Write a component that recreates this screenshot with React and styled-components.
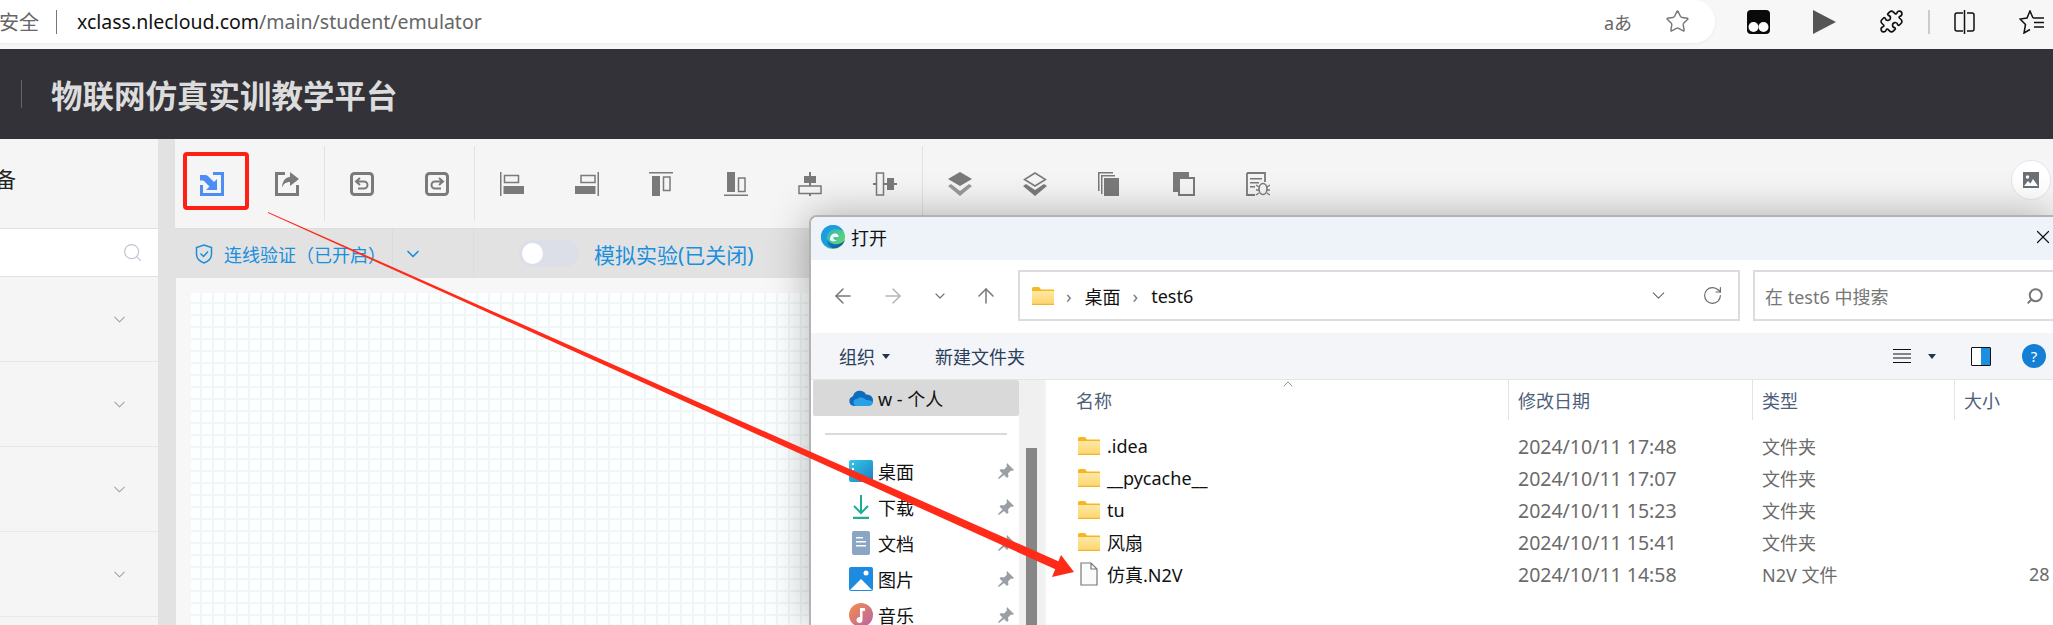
import styled, { createGlobalStyle } from "styled-components";
import { Star, Puzzle, Search, ChevronDown, ArrowLeft, ArrowRight, ArrowUp, RotateCw, X, ChevronUp } from "lucide-react";

const GlobalStyle = createGlobalStyle`
    html, body {
        margin: 0;
        padding: 0;
        background: #f5f5f5;
        overflow: hidden;
    }
    * {
        box-sizing: border-box;
    }
`

const sans = `"Noto Sans", "Noto Sans CJK SC", sans-serif`

// toolbar glyphs, all on a 24x24 box
const icons = {
    import: <>
        <path d="M13 0h11v24H0V13h3v8h18V3h-8z" fill="#4d8ef5" />
        <path d="M0 3h5c1.500 0 2.500.5 3.500 1.500L14 10l3-3v11H6l3.500-3.500L4.500 9.500C4 9 3.500 8.500 2.500 8.500H0z" fill="#4d8ef5" />
    </>,
    export: <>
        <path d="M10 0H0v24h24V13h-3v8H3V3h7z" />
        <path d="M15 0l9 7-9 7v-4c-4 0-7 2-8 6 0-6 3-11 8-11z" />
    </>,
    undo: <>
        <rect x="1.5" y="1.5" width="21" height="21" rx="3" fill="none" stroke="#7a7a7a" strokeWidth="3" />
        <path d="M10 6L6 9.5l4 3.5M6.5 9.5H14a3.2 3.2 0 0 1 0 7H8" fill="none" stroke="#7a7a7a" strokeWidth="2" />
    </>,
    redo: <>
        <rect x="1.5" y="1.5" width="21" height="21" rx="3" fill="none" stroke="#7a7a7a" strokeWidth="3" />
        <path d="M14 6l4 3.5-4 3.5M17.5 9.5H10a3.2 3.2 0 0 0 0 7h6" fill="none" stroke="#7a7a7a" strokeWidth="2" />
    </>,
    alignLeft: <>
        <rect x="0" y="0" width="1.5" height="24" />
        <rect x="4.5" y="3.5" width="14" height="7" fill="none" stroke="#7a7a7a" strokeWidth="1.5" />
        <rect x="3.5" y="14" width="20.5" height="8" />
    </>,
    alignRight: <>
        <rect x="22.5" y="0" width="1.5" height="24" />
        <rect x="6" y="3.5" width="14" height="7" fill="none" stroke="#7a7a7a" strokeWidth="1.5" />
        <rect x="0" y="14" width="20.5" height="8" />
    </>,
    alignTop: <>
        <rect x="0" y="0" width="24" height="1.5" />
        <rect x="3" y="4" width="8" height="20" />
        <rect x="14.5" y="5" width="6.5" height="13.5" fill="none" stroke="#7a7a7a" strokeWidth="1.5" />
    </>,
    alignBottom: <>
        <rect x="0" y="22.5" width="24" height="1.5" />
        <rect x="3" y="0" width="8" height="20" />
        <rect x="14.5" y="6" width="6.5" height="13.5" fill="none" stroke="#7a7a7a" strokeWidth="1.5" />
    </>,
    alignMiddle: <>
        <rect x="11" y="0" width="2" height="24" />
        <rect x="6" y="4" width="12" height="7" />
        <rect x="1" y="14" width="22" height="7.5" fill="#f5f5f5" stroke="#7a7a7a" strokeWidth="1.5" />
    </>,
    alignCenter: <>
        <rect x="0" y="11" width="24" height="2" />
        <rect x="3.5" y="1" width="7" height="22" fill="#f5f5f5" stroke="#7a7a7a" strokeWidth="1.5" />
        <rect x="14" y="6" width="7" height="12" />
    </>,
    layerUp: <>
        <path d="M12 0l12 7-12 7L0 7z" />
        <path d="M3 12L0 14l12 10 12-10-3-2-9 7z" opacity=".75" />
    </>,
    layerDown: <>
        <path d="M12 1l10.5 6.5L12 14 1.5 7.5z" fill="none" stroke="#7a7a7a" strokeWidth="1.5" />
        <path d="M3 12L0 14l12 10 12-10-3-2-9 6z" />
    </>,
    copyFront: <>
        <path d="M1 0h15v1.500H2.500V19H1z" />
        <path d="M4 3h14v1.500H5.500V22H4z" />
        <rect x="7" y="6" width="15" height="18" />
    </>,
    copyBack: <>
        <path d="M1 0h16v5H6v15H1z" />
        <rect x="7" y="6" width="15" height="17" fill="#f5f5f5" stroke="#7a7a7a" strokeWidth="2" />
    </>,
    bugList: <>
        <path d="M1 1h18v9M9 23H1V1" fill="none" stroke="#7a7a7a" strokeWidth="1.8" />
        <path d="M4 6h12v1.6H4zM4 10h9v1.6H4zM4 14h5v1.6H4z" />
        <ellipse cx="17" cy="17" rx="4" ry="5.5" fill="none" stroke="#7a7a7a" strokeWidth="1.6" />
        <path d="M10 13l3 2M24 13l-3 2M10 18h3M21 18h3M10 23l3-2M24 23l-3-2" stroke="#7a7a7a" strokeWidth="1.4" />
    </>,
}

const toolGroups = [
    ['import', 'export'],
    ['undo', 'redo'],
    ['alignLeft', 'alignRight', 'alignTop', 'alignBottom', 'alignMiddle', 'alignCenter'],
    ['layerUp', 'layerDown', 'copyFront', 'copyBack', 'bugList'],
]

const navItems = [
    { key: 'desktop', label: '桌面' },
    { key: 'download', label: '下载' },
    { key: 'docs', label: '文档' },
    { key: 'pictures', label: '图片' },
    { key: 'music', label: '音乐' },
]

const files = [
    { name: '.idea', date: '2024/10/11 17:48', type: '文件夹' },
    { name: '__pycache__', date: '2024/10/11 17:07', type: '文件夹' },
    { name: 'tu', date: '2024/10/11 15:23', type: '文件夹' },
    { name: '风扇', date: '2024/10/11 15:41', type: '文件夹' },
    { name: '仿真.N2V', date: '2024/10/11 14:58', type: 'N2V 文件', size: '28', isFile: true },
]

const Folder = ({ width = 22, height = 18 }) => (
    <svg width={width} height={height} viewBox="0 0 22 18">
        <defs>
            <linearGradient id="fold" x1="0" y1="0" x2="0" y2="1">
                <stop offset="0" stopColor="#ffe9a6" />
                <stop offset="1" stopColor="#fcd46a" />
            </linearGradient>
        </defs>
        <path d="M0 1.5A1.5 1.5 0 0 1 1.500 0H7l2 2.500h13V5H0z" fill="#f5b91f" />
        <rect x="0" y="4" width="22" height="14" rx="1" fill="url(#fold)" />
        <rect x="0" y="16.800" width="22" height="1.200" fill="#efb52e" />
    </svg>
)

const EdgeLogo = () => (
    <svg width="24" height="24" viewBox="0 0 24 24">
        <defs>
            <linearGradient id="edgeA" x1="0" y1="0" x2="1" y2="1">
                <stop offset="0" stopColor="#1fa8d8" />
                <stop offset="1" stopColor="#6fe05a" />
            </linearGradient>
            <linearGradient id="edgeB" x1="0" y1="0" x2="1" y2="1">
                <stop offset="0" stopColor="#1a8ad4" />
                <stop offset="1" stopColor="#0c4fa0" />
            </linearGradient>
        </defs>
        <circle cx="12" cy="12" r="12" fill="url(#edgeA)" />
        <path d="M24 15c-2 6-8 9-13 8-4-1-6-5-5-9 2 4 7 6 11 5 3-.5 5-2 7-4z" fill="url(#edgeB)" />
        <path d="M0 12C0 5 5 0 12 0c4 0 8 2 10 6-5-3-14-3-16 5-1 4 0 9 5 12C5 23 0 18 0 12z" fill="#1b9de2" />
        <path d="M9 14c0-4 3-6 6-5.500 2 .5 3 2 2.500 3.500H12.500c-.5 2 1 3.500 3.500 3.500-3 1.500-7 1-7-1.500z" fill="#f2f8ff" />
    </svg>
)

const navGlyphs = {
    desktop: (
        <svg width="24" height="24" viewBox="0 0 24 24">
            <defs>
                <linearGradient id="desk" x1="0" y1="0" x2="1" y2="1">
                    <stop offset="0" stopColor="#35c9e8" />
                    <stop offset="1" stopColor="#1a7fc4" />
                </linearGradient>
            </defs>
            <rect width="24" height="22" y="1" rx="2" fill="url(#desk)" />
            <path d="M3 4h2v2H3zM3 9h2v2H3z" fill="#fff" />
        </svg>
    ),
    download: (
        <svg width="24" height="24" viewBox="0 0 24 24" fill="none" stroke="#20ad93" strokeWidth="2">
            <path d="M12 0v18M5 11l7 7 7-7" />
            <path d="M4 23h16" strokeWidth="2.500" />
        </svg>
    ),
    docs: (
        <svg width="24" height="24" viewBox="0 0 24 24">
            <rect x="3" y="0" width="18" height="24" rx="2" fill="#8ba5c4" />
            <path d="M7 6h7v1.500H7zM7 10h10v1.500H7zM7 14h10v1.500H7z" fill="#fff" />
        </svg>
    ),
    pictures: (
        <svg width="24" height="24" viewBox="0 0 24 24">
            <rect width="24" height="24" rx="2" fill="#1c8be0" />
            <path d="M1 23l11-11 11 11z" fill="#fff" />
            <circle cx="17" cy="6" r="2.500" fill="#fff" />
        </svg>
    ),
    music: (
        <svg width="24" height="24" viewBox="0 0 24 24">
            <defs>
                <linearGradient id="mus" x1="0" y1="0" x2="1" y2="1">
                    <stop offset="0" stopColor="#f59048" />
                    <stop offset="1" stopColor="#b860a8" />
                </linearGradient>
            </defs>
            <circle cx="12" cy="12" r="12" fill="url(#mus)" />
            <path d="M11 5h5v3h-2.500v9a3 3 0 1 1-2.500-3z" fill="#fff" />
        </svg>
    ),
}

const App = () => {
    return (
        <Page>
            <GlobalStyle />
            <BrowserBar>
                <UrlPill>
                    <Security>安全</Security>
                    <UrlDivider />
                    <Url><b>xclass.nlecloud.com</b>/main/student/emulator</Url>
                    <Translate>aあ</Translate>
                    <Star size={25} strokeWidth={1.4} color="#777" />
                </UrlPill>
                <BrowserTools>
                    <svg width="23" height="24" viewBox="0 0 23 24">
                        <rect width="23" height="24" rx="4" fill="#0a0a0a" />
                        <circle cx="6.500" cy="17" r="5" fill="#fff" />
                        <circle cx="16.500" cy="17" r="5" fill="#fff" />
                    </svg>
                    <svg width="23" height="24" viewBox="0 0 23 24">
                        <path d="M0 0l23 12L0 24z" fill="#555" />
                    </svg>
                    <Puzzle size={25} strokeWidth={1.6} color="#111" />
                    <BrowserDivider />
                    <svg width="23" height="24" viewBox="0 0 23 24" fill="none" stroke="#111" strokeWidth="1.500">
                        <path d="M10 3H4a2 2 0 0 0-2 2v14a2 2 0 0 0 2 2h6M14 3h5a2 2 0 0 1 2 2v14a2 2 0 0 1-2 2h-5M11.500 0v24" />
                    </svg>
                    <svg width="25" height="24" viewBox="0 0 25 24" fill="none" stroke="#111" strokeWidth="1.500">
                        <path d="M14 8L11 1 8 8 1 9l5.500 5.500L5 23l6-3.500M14 8h11M15 12.500h10M15 17h10" />
                    </svg>
                </BrowserTools>
            </BrowserBar>

            <Header>
                <HeaderDivider />
                <Title>物联网仿真实训教学平台</Title>
            </Header>

            <Body>
                <Sidebar>
                    <SidebarTitle>备</SidebarTitle>
                    <SearchBox>
                        <Search size={21} strokeWidth={1.4} color="#c0c6d2" />
                    </SearchBox>
                    {[0, 1, 2, 3].map(i => (
                        <Accordion key={i}>
                            <ChevronDown size={19} strokeWidth={1.3} color="#9ea3ab" />
                        </Accordion>
                    ))}
                </Sidebar>
                <Workspace>
                    <Toolbar>
                        {toolGroups.map((group, i) => (
                            <ToolGroup key={i}>
                                {group.map(name => (
                                    <ToolButton key={name} $picked={name === 'import'}>
                                        <ToolIcon viewBox="0 0 24 24">{icons[name]}</ToolIcon>
                                    </ToolButton>
                                ))}
                            </ToolGroup>
                        ))}
                        <ImageButton>
                            <svg width="16" height="16" viewBox="0 0 16 16">
                                <rect width="16" height="16" fill="#6b6f76" />
                                <path d="M1 14l4-5 2.500 2.500L10 7l5 7z" fill="#fff" />
                                <circle cx="4.500" cy="5" r="1.700" fill="#fff" />
                            </svg>
                        </ImageButton>
                    </Toolbar>
                    <StatusBar>
                        <VerifyBlock>
                            <svg width="18" height="20" viewBox="0 0 18 20" fill="none" stroke="#1a8fdd" strokeWidth="1.500">
                                <path d="M9 1l7.500 2.500V10c0 5-3.500 7.500-7.500 9-4-1.500-7.500-4-7.500-9V3.500z" />
                                <path d="M5.500 9.500L8.500 12.500 13 7.500" />
                            </svg>
                            <BlueText>连线验证（已开启）</BlueText>
                        </VerifyBlock>
                        <VerifyToggle>
                            <ChevronDown size={20} strokeWidth={2} color="#1a8fdd" />
                        </VerifyToggle>
                        <SimBlock>
                            <Switch><Knob /></Switch>
                            <SimText>模拟实验(已关闭)</SimText>
                        </SimBlock>
                    </StatusBar>
                    <Canvas>
                        <Grid />
                    </Canvas>
                </Workspace>
            </Body>

            <Dialog>
                <DialogTitle>
                    <EdgeLogo />
                    <DialogName>打开</DialogName>
                    <CloseIcon><X size={22} strokeWidth={1.3} color="#111" /></CloseIcon>
                </DialogTitle>
                <NavRow>
                    <NavArrows>
                        <ArrowLeft size={24} strokeWidth={1.5} color="#777" />
                        <ArrowRight size={24} strokeWidth={1.5} color="#b5b5b5" />
                        <ChevronDown size={16} strokeWidth={1.8} color="#777" />
                        <ArrowUp size={24} strokeWidth={1.5} color="#777" />
                    </NavArrows>
                    <AddressBox>
                        <Folder />
                        <Crumb>›</Crumb>
                        <span>桌面</span>
                        <Crumb>›</Crumb>
                        <span>test6</span>
                        <AddressEnd>
                            <ChevronDown size={21} strokeWidth={1.2} color="#666" />
                            <RotateCw size={21} strokeWidth={1.3} color="#666" />
                        </AddressEnd>
                    </AddressBox>
                    <FileSearch>
                        <span>在 test6 中搜索</span>
                        <Search size={18} strokeWidth={2.6} color="#777" style={{ transform: 'scaleX(-1)' }} />
                    </FileSearch>
                </NavRow>
                <CommandBar>
                    <Command>组织</Command>
                    <Caret />
                    <NewFolder>新建文件夹</NewFolder>
                    <CommandEnd>
                        <svg width="18" height="14" viewBox="0 0 18 14" stroke="#111">
                            <path d="M0 .5h18M0 5h18M0 9h18M0 13.500h18" />
                        </svg>
                        <Caret />
                        <PaneIcon />
                        <HelpIcon>?</HelpIcon>
                    </CommandEnd>
                </CommandBar>
                <DialogBody>
                    <NavPane>
                        <NavList>
                            <SelectedNav>
                                <svg width="24" height="17" viewBox="0 0 24 17">
                                    <path d="M5 16a5 5 0 0 1-1-9.800A7 7 0 0 1 17 4.500 6 6 0 0 1 24 11a5 5 0 0 1-5 5z" fill="#0f6cbd" />
                                    <path d="M8 16a3.500 3.500 0 0 1 0-7c3-3 8-1 9 1 3 0 7 1 7 2a5 5 0 0 1-5 4z" fill="#2aa0e8" />
                                </svg>
                                <span>w - 个人</span>
                            </SelectedNav>
                            <NavSeparator />
                            {navItems.map(item => (
                                <NavItem key={item.key}>
                                    {navGlyphs[item.key]}
                                    <span>{item.label}</span>
                                    <PinIcon viewBox="0 0 16 16">
                                        <path d="M9 0l7 7-2 1-1-.500-3 3 .5 3-1.500 1.500-3-3L1 16l-1-1 4.500-4.500-3-3L3 6l3 .5 3-3L8.500 2z" />
                                    </PinIcon>
                                </NavItem>
                            ))}
                        </NavList>
                        <ScrollTrack><ScrollThumb /></ScrollTrack>
                    </NavPane>
                    <FileList>
                        <ListHeader>
                            <HeaderCell>
                                名称
                                <SortMark><ChevronUp size={16} strokeWidth={1} color="#666" /></SortMark>
                            </HeaderCell>
                            <HeaderCell $line>修改日期</HeaderCell>
                            <HeaderCell $line>类型</HeaderCell>
                            <HeaderCell $line>大小</HeaderCell>
                        </ListHeader>
                        {files.map(file => (
                            <FileRow key={file.name}>
                                <FileName>
                                    {file.isFile ? (
                                        <svg width="22" height="24" viewBox="0 0 22 24" fill="#fafafa" stroke="#777" strokeWidth="1.200">
                                            <path d="M3 1h10l6 6v16H3zM13 1v6h6" />
                                        </svg>
                                    ) : <Folder />}
                                    <span>{file.name}</span>
                                </FileName>
                                <FileDate>{file.date}</FileDate>
                                <FileMeta>{file.type}</FileMeta>
                                <FileSize>{file.size}</FileSize>
                            </FileRow>
                        ))}
                    </FileList>
                </DialogBody>
            </Dialog>

            {/* the hand drawn annotation arrow on top of the screenshot */}
            <Annotation viewBox="0 0 2053 625">
                <path d="M268 212L1060 562l-3 8L268 213z" fill="#ff2a18" />
                <path d="M1074 572L1052 577 1061 555z" fill="#ff2a18" />
            </Annotation>
        </Page>
    );
}

const Page = styled.div`
    position: relative;
    width: 2053px;
    height: 625px;
    overflow: hidden;
    background: #f5f5f5;
    font-family: ${sans};
`

const BrowserBar = styled.div`
    display: flex;
    height: 49px;
    background: #f7f7f7;
`

const UrlPill = styled.div`
    display: flex;
    align-items: center;
    width: 1715px;
    height: 43px;
    padding-right: 25px;
    background: #fff;
    border-radius: 0 21px 21px 0;
    box-shadow: 0 1px 3px rgba(0, 0, 0, 0.06);
`

const Security = styled.span`
    font-size: 20px;
    color: #666;
    width: 40px;
    margin-left: -1px;
`

const UrlDivider = styled.span`
    width: 1px;
    height: 24px;
    margin: 0 20px 0 17px;
    background: #777;
`

const Url = styled.span`
    font-size: 19.5px;
    color: #666;
    flex: 1;

    b {
        font-weight: 400;
        color: #111;
    }
`

const Translate = styled.span`
    font-size: 18px;
    color: #666;
    margin-right: 33px;
`

const BrowserTools = styled.div`
    flex: 1;
    display: flex;
    align-items: center;
    height: 43px;
    padding-left: 32px;
    gap: 43px;
`

const BrowserDivider = styled.span`
    width: 2px;
    height: 24px;
    margin: 0 -20px 0 -19px;
    background: #ccc;
`

const Header = styled.div`
    display: flex;
    align-items: center;
    height: 90px;
    padding-left: 21px;
    background: #333238;
`

const HeaderDivider = styled.span`
    width: 1px;
    height: 28px;
    margin-right: 29px;
    background: #66656a;
`

const Title = styled.h1`
    margin: 0;
    font-size: 31.5px;
    font-weight: 700;
    color: #dcdcdc;
    font-family: "Noto Sans CJK SC", sans-serif;
`

const Body = styled.div`
    display: flex;
    height: 486px;
`

const Sidebar = styled.div`
    width: 175px;
    flex-shrink: 0;
    background: #f5f5f5;
    border-right: 17px solid #e2e2e2;
`

const SidebarTitle = styled.div`
    height: 90px;
    padding-top: 27px;
    font-size: 21px;
    line-height: 26px;
    color: #222;
    border-bottom: 1px solid #dfe1e6;
    margin-left: -5px;
`

const SearchBox = styled.div`
    display: flex;
    align-items: center;
    justify-content: flex-end;
    height: 48px;
    padding-right: 15px;
    background: #fff;
    border-bottom: 1px solid #dfe1e6;
`

const Accordion = styled.div`
    display: flex;
    align-items: center;
    justify-content: flex-end;
    height: 85px;
    padding-right: 29px;
    border-bottom: 1px solid #e8e8e8;
`

const Workspace = styled.div`
    flex: 1;
    display: flex;
    flex-direction: column;
`

const Toolbar = styled.div`
    display: flex;
    align-items: center;
    height: 90px;
    padding-right: 2px;
    background: #f5f5f5;
    border-bottom: 1px solid #dedede;
`

const ToolGroup = styled.div`
    display: flex;
    height: 75px;
    border-right: 1px solid #e2e2e2;

    &:nth-child(4) {
        border-right: none;
    }
`

const ToolButton = styled.div`
    display: flex;
    align-items: center;
    justify-content: center;
    position: relative;
    width: 74.5px;

    ${({ $picked }) => $picked && `
        &::after {
            content: "";
            box-sizing: border-box;
            position: absolute;
            left: 8px;
            top: 6px;
            width: 66px;
            height: 58px;
            border: 4px solid #fe2014;
            border-radius: 4px;
        }
    `}
`

const ToolIcon = styled.svg`
    width: 24px;
    height: 24px;
    fill: #7a7a7a;
    margin-top: 0;
`

const ImageButton = styled.div`
    display: flex;
    align-items: center;
    justify-content: center;
    width: 40px;
    height: 40px;
    margin-left: auto;
    margin-top: -8px;
    background: #fff;
    border: 1px solid #e3e5ea;
    border-radius: 50%;
`

const StatusBar = styled.div`
    display: flex;
    align-items: center;
    height: 49px;
    background: #e2e2e2;
`

const VerifyBlock = styled.div`
    display: flex;
    align-items: center;
    gap: 11px;
    width: 218px;
    height: 100%;
    padding-left: 20px;
    border-right: 1px solid #dcdcdc;
`

const BlueText = styled.span`
    font-size: 18px;
    color: #1a8fdd;
    white-space: nowrap;
`

const VerifyToggle = styled.div`
    display: flex;
    align-items: center;
    width: 81px;
    height: 100%;
    padding-left: 10px;
    border-right: 1px solid #dcdcdc;
`

const SimBlock = styled.div`
    display: flex;
    align-items: center;
    gap: 15px;
    padding-left: 45px;
`

const Switch = styled.div`
    display: flex;
    align-items: center;
    width: 60px;
    height: 27px;
    padding-left: 3px;
    background: #dcdfe8;
    border-radius: 14px;
`

const Knob = styled.span`
    width: 21px;
    height: 21px;
    border-radius: 50%;
    background: #fff;
`

const SimText = styled.span`
    font-size: 21px;
    color: #1a8fdd;
    white-space: nowrap;
`

const Canvas = styled.div`
    flex: 1;
    padding: 15px 0 0 15px;
    background: #f7f7f7;
    border-left: 1px solid #e0e0e6;
`

const Grid = styled.div`
    height: 100%;
    background-color: #fbffff;
    background-image:
        linear-gradient(#f2f5f6 2px, transparent 2px),
        linear-gradient(90deg, #f2f5f6 2px, transparent 2px);
    background-size: 12px 12px;
    background-position: 9px 9px;
`

const Dialog = styled.div`
    position: absolute;
    left: 809px;
    top: 215px;
    width: 1244px;
    height: 410px;
    overflow: hidden;
    background: #fff;
    border: 2px solid #b3b3b3;
    border-right: none;
    border-bottom: none;
    border-radius: 8px 0 0 0;
    box-shadow: 0 0 40px rgba(0, 0, 0, 0.3);
    color: #111;
`

const DialogTitle = styled.div`
    display: flex;
    align-items: center;
    gap: 6px;
    height: 43px;
    padding: 0 0 3px 10px;
    background: #eef3fa;
`

const DialogName = styled.span`
    font-size: 18px;
`

const CloseIcon = styled.span`
    display: flex;
    margin-left: auto;
    margin-right: -1px;
`

const NavRow = styled.div`
    display: flex;
    align-items: center;
    height: 73px;
    padding-bottom: 2px;
`

const NavArrows = styled.div`
    display: flex;
    align-items: center;
    justify-content: space-between;
    width: 207px;
    padding: 0 20px 0 20px;
`

const AddressBox = styled.div`
    display: flex;
    align-items: center;
    width: 722px;
    height: 51px;
    padding: 0 15px 0 12px;
    border: 2px solid #dcdcdc;
    font-size: 18px;
`

const Crumb = styled.span`
    margin: 0 13px 0 12px;
    color: #777;
`

const AddressEnd = styled.div`
    display: flex;
    align-items: center;
    gap: 33px;
    margin-left: auto;
`

const FileSearch = styled.div`
    flex: 1;
    display: flex;
    align-items: center;
    justify-content: space-between;
    height: 51px;
    margin-left: 13px;
    padding: 0 9px 0 10px;
    border: 2px solid #dcdcdc;
    border-right: none;
    font-size: 18px;
    color: #777;
`

const CommandBar = styled.div`
    display: flex;
    align-items: center;
    height: 47px;
    padding-left: 28px;
    background: #f3f5f8;
    border-bottom: 1px solid #e4e4e4;
    font-size: 18px;
    color: #2b3f5c;
`

const Command = styled.span`
    margin-right: 7px;
`

const NewFolder = styled.span`
    margin-left: 45px;
`

const Caret = styled.span`
    width: 0;
    height: 0;
    border-left: 4px solid transparent;
    border-right: 4px solid transparent;
    border-top: 5px solid #24344f;
`

const CommandEnd = styled.div`
    display: flex;
    align-items: center;
    gap: 17px;
    margin-left: auto;
    margin-right: 7px;
`

const PaneIcon = styled.span`
    width: 20px;
    height: 19px;
    margin: 0 14px 0 18px;
    border: 1.5px solid #111;
    border-radius: 1px;
    background: linear-gradient(90deg, #fff 50%, #1b8fe0 50%);
`

const HelpIcon = styled.span`
    width: 24px;
    height: 24px;
    margin-left: 0;
    border-radius: 50%;
    background: #1380d6;
    color: #fff;
    font-size: 15px;
    line-height: 24px;
    text-align: center;
`

const DialogBody = styled.div`
    display: flex;
    height: 245px;
`

const NavPane = styled.div`
    display: flex;
    width: 235px;
    border-right: 2px solid #f3f3f3;
`

const NavList = styled.div`
    width: 208px;
    padding-left: 2px;
    font-size: 18px;
`

const SelectedNav = styled.div`
    display: flex;
    align-items: center;
    gap: 5px;
    height: 36px;
    padding-left: 36px;
    background: #d9d9d9;
    border-radius: 2px;
`

const NavSeparator = styled.div`
    height: 2px;
    margin: 17px 12px 18px 12px;
    background: #d9d9d9;
`

const NavItem = styled.div`
    display: flex;
    align-items: center;
    gap: 5px;
    height: 36px;
    padding-left: 36px;
`

const PinIcon = styled.svg`
    width: 16px;
    height: 16px;
    margin-left: auto;
    margin-right: 5px;
    fill: #9a9fa6;
`

const ScrollTrack = styled.div`
    flex: 1;
    padding: 68px 7px 0;
    background: #f0f0f0;
`

const ScrollThumb = styled.div`
    height: 100%;
    background: #868686;
`

const FileList = styled.div`
    flex: 1;
    padding-left: 0;
    font-size: 18px;
`

const columns = `462px 244px 202px 1fr`

const ListHeader = styled.div`
    display: grid;
    grid-template-columns: ${columns};
    height: 40px;
    margin-bottom: 10px;
    color: #4c607a;
`

const HeaderCell = styled.div`
    position: relative;
    display: flex;
    align-items: center;
    padding-left: ${({ $line }) => ($line ? '9px' : '30px')};
    border-left: ${({ $line }) => ($line ? '1px solid #e4e4e4' : 'none')};
`

const SortMark = styled.span`
    position: absolute;
    left: 234px;
    top: -4px;
    display: flex;
`

const FileRow = styled.div`
    display: grid;
    grid-template-columns: ${columns};
    height: 32px;
    align-items: center;
`

const FileName = styled.div`
    display: flex;
    align-items: center;
    gap: 7px;
    padding-left: 32px;
`

const FileMeta = styled.div`
    padding-left: 10px;
    color: #6b6b6b;
`

const FileDate = styled(FileMeta)`
    font-size: 19.5px;
`

const FileSize = styled.div`
    padding-left: 75px;
    color: #6b6b6b;
`

const Annotation = styled.svg`
    position: absolute;
    left: 0;
    top: 0;
    width: 2053px;
    height: 625px;
    pointer-events: none;
`

export default App;
